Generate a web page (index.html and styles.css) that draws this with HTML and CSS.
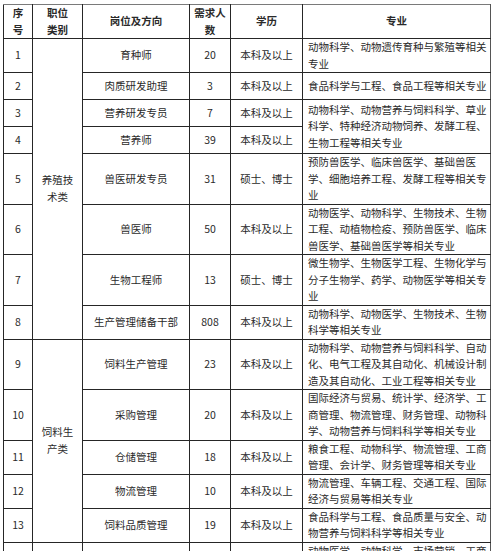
FILE: index.html
```html
<!DOCTYPE html>
<html lang="zh-CN">
<head>
<meta charset="utf-8">
<link rel="stylesheet" href="styles.css">
</head>
<body>
<div class="wrap">
<table class="jobs">
<colgroup>
<col class="c-no"><col class="c-cat"><col class="c-pos"><col class="c-num"><col class="c-edu"><col class="c-major">
</colgroup>
<thead>
<tr class="head">
<th>序<br>号</th>
<th>职位<br>类别</th>
<th>岗位及方向</th>
<th>需求人<br>数</th>
<th>学历</th>
<th>专业</th>
</tr>
</thead>
<tbody>
<tr>
<td>1</td>
<td rowspan="8">养殖技<br>术类</td>
<td>育种师</td><td>20</td><td>本科及以上</td>
<td class="major">动物科学、动物遗传育种与繁殖等相关专业</td>
</tr>
<tr class="short">
<td>2</td><td>肉质研发助理</td><td>3</td><td>本科及以上</td>
<td class="major">食品科学与工程、食品工程等相关专业</td>
</tr>
<tr class="short">
<td>3</td><td>营养研发专员</td><td>7</td><td>本科及以上</td>
<td class="major" rowspan="2">动物科学、动物营养与饲料科学、草业科学、特种经济动物饲养、发酵工程、生物工程等相关专业</td>
</tr>
<tr class="short">
<td>4</td><td>营养师</td><td>39</td><td>本科及以上</td>
</tr>
<tr>
<td>5</td><td>兽医研发专员</td><td>31</td><td>硕士、博士</td>
<td class="major">预防兽医学、临床兽医学、基础兽医学、细胞培养工程、发酵工程等相关专业</td>
</tr>
<tr>
<td>6</td><td>兽医师</td><td>50</td><td>本科及以上</td>
<td class="major">动物医学、动物科学、生物技术、生物工程、动植物检疫、预防兽医学、临床兽医学、基础兽医学等相关专业</td>
</tr>
<tr>
<td>7</td><td>生物工程师</td><td>13</td><td>硕士、博士</td>
<td class="major">微生物学、生物医学工程、生物化学与分子生物学、药学、动物医学等相关专业</td>
</tr>
<tr>
<td>8</td><td>生产管理储备干部</td><td>808</td><td>本科及以上</td>
<td class="major">动物科学、动物医学、生物技术、生物科学等相关专业</td>
</tr>
<tr>
<td>9</td>
<td rowspan="5">饲料生<br>产类</td>
<td>饲料生产管理</td><td>23</td><td>本科及以上</td>
<td class="major">动物科学、动物营养与饲料科学、自动化、电气工程及其自动化、机械设计制造及其自动化、工业工程等相关专业</td>
</tr>
<tr>
<td>10</td><td>采购管理</td><td>20</td><td>本科及以上</td>
<td class="major">国际经济与贸易、统计学、经济学、工商管理、物流管理、财务管理、动物科学、动物营养与饲料科学等相关专业</td>
</tr>
<tr>
<td>11</td><td>仓储管理</td><td>18</td><td>本科及以上</td>
<td class="major">粮食工程、动物科学、物流管理、工商管理、会计学、财务管理等相关专业</td>
</tr>
<tr>
<td>12</td><td>物流管理</td><td>10</td><td>本科及以上</td>
<td class="major">物流管理、车辆工程、交通工程、国际经济与贸易等相关专业</td>
</tr>
<tr>
<td>13</td><td>饲料品质管理</td><td>19</td><td>本科及以上</td>
<td class="major">食品科学与工程、食品质量与安全、动物营养与饲料科学等相关专业</td>
</tr>
<tr>
<td>14</td><td>销售类</td><td>销售管理</td><td>60</td><td>本科及以上</td>
<td class="major">动物医学、动物科学、市场营销、工商管理、生物工程、预防兽医学、国际经济与贸易等相关专业</td>
</tr>
</tbody>
</table>
</div>
</body>
</html>
```

FILE: styles.css
```css
html, body {
  margin: 0;
  padding: 0;
  background: #ffffff;
  overflow: hidden;
}

.wrap {
  padding: 4px 0 0 3px;
}

.jobs {
  border-collapse: collapse;
  table-layout: fixed;
  width: 487px;
  font-family: "Noto Sans CJK SC", "Noto Sans", sans-serif;
  font-size: 10.5px;
  line-height: 16.5px;
  color: #2a2a2a;
  text-spacing-trim: space-all;
}

.c-no { width: 29px; }
.c-cat { width: 50px; }
.c-pos { width: 107px; }
.c-num { width: 41px; }
.c-edu { width: 72px; }
.c-major { width: 188px; }

.jobs th,
.jobs td {
  border: 1px solid #262626;
  padding: 0;
  text-align: center;
  vertical-align: middle;
  overflow: hidden;
}

.jobs th {
  font-weight: 700;
  line-height: 16.5px;
}

.head th {
  border-top-color: #7a7a7a;
}

.jobs th:last-child,
.jobs td.major {
  border-right-color: #555555;
}

.short td {
  height: 26px;
}

.jobs td.major {
  text-align: left;
  padding-left: 5px;
  line-break: strict;
  text-spacing-trim: space-all;
}
```
